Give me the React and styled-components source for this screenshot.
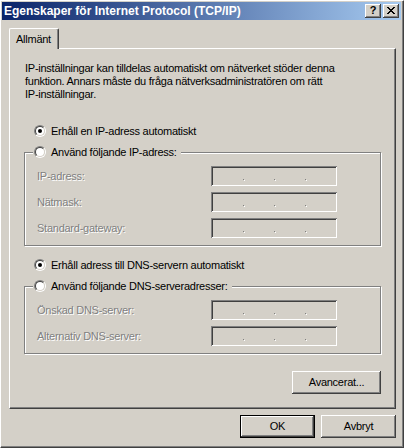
import React from 'react';
import styled, { createGlobalStyle } from 'styled-components';

const FACE = '#d4d0c8';
const FONT = '"Liberation Sans", Arial, sans-serif';

const GlobalStyle = createGlobalStyle`
  html, body { margin: 0; padding: 0; background: ${FACE}; }
  body { font-family: ${FONT}; font-size: 11px; }
`;

const Window = styled.div`
  width: 404px;
  height: 448px;
  box-sizing: border-box;
  background: ${FACE};
  border-top: 1px solid #fff;
  border-left: 1px solid #fff;
  border-right: 1px solid #404040;
  border-bottom: 1px solid #404040;
  box-shadow: inset -1px -1px 0 #808080;
  padding: 1px 2px 2px 1px;
  display: flex;
  flex-direction: column;
  font-family: ${FONT};
  font-size: 11px;
  line-height: 13px;
  letter-spacing: -0.25px;
  color: #000;
`;

const TitleBar = styled.div`
  height: 18px;
  flex: none;
  display: flex;
  align-items: center;
  padding: 0 2px;
  background: linear-gradient(to right, #0a246a, #a6caf0);
`;

const TitleText = styled.div`
  flex: 1;
  color: #fff;
  font-weight: bold;
  font-size: 12px;
  letter-spacing: 0;
  white-space: nowrap;
`;

const CaptionButtons = styled.div`
  display: flex;
  gap: 2px;
`;

const CaptionButton = styled.div`
  width: 16px;
  height: 14px;
  box-sizing: border-box;
  background: ${FACE};
  box-shadow: inset -1px -1px #404040, inset 1px 1px #fff, inset -2px -2px #808080, inset 2px 2px ${FACE};
  display: flex;
  align-items: center;
  justify-content: center;
  font-weight: bold;
  font-size: 11px;
  line-height: 1;
  letter-spacing: 0;
  color: #000;
  padding-bottom: 1px;
`;

const Body = styled.div`
  flex: 1;
  display: flex;
  flex-direction: column;
  padding: 8px 5px 0 7px;
`;

const TabStrip = styled.div`
  display: flex;
  height: 20px;
`;

const Tab = styled.div`
  position: relative;
  z-index: 1;
  width: 50px;
  height: 21px;
  box-sizing: border-box;
  background: ${FACE};
  border-top: 1px solid #fff;
  border-left: 1px solid #fff;
  border-right: 1px solid #404040;
  border-radius: 2px 2px 0 0;
  box-shadow: inset -1px 0 #808080;
  padding: 4px 0 0 6px;
  white-space: nowrap;
`;

const Panel = styled.div`
  height: 361px;
  box-sizing: border-box;
  border-top: 1px solid #fff;
  border-left: 1px solid #fff;
  border-right: 1px solid #404040;
  border-bottom: 1px solid #404040;
  box-shadow: inset -1px -1px #808080;
  padding: 13px 14px 0 14px;
  display: flex;
  flex-direction: column;
`;

const Description = styled.p`
  margin: 0 0 0 1px;
  white-space: nowrap;
`;

const RadioRow = styled.div`
  display: flex;
  align-items: center;
  gap: 5px;
  height: 14px;
  margin: ${p => p.$top}px 0 0 10px;
  white-space: nowrap;
`;

const RadioOuter = styled.span`
  width: 12px;
  height: 12px;
  flex: none;
  box-sizing: border-box;
  border-radius: 50%;
  border: 1px solid;
  border-color: #808080 #fff #fff #808080;
  display: flex;
`;

const RadioInner = styled.span`
  flex: 1;
  border-radius: 50%;
  border: 1px solid;
  border-color: #404040 ${FACE} ${FACE} #404040;
  background: #fff;
  display: flex;
  align-items: center;
  justify-content: center;
`;

const RadioDot = styled.span`
  width: 4px;
  height: 4px;
  border-radius: 50%;
  background: #000;
`;

const Group = styled.fieldset`
  margin: 7px 0 0 0;
  padding: 7px 0 7px 12px;
  border: 1px solid #808080;
  box-shadow: inset 1px 1px #fff, 1px 1px #fff;
  min-inline-size: 0;
`;

const Legend = styled.legend`
  display: flex;
  align-items: center;
  gap: 5px;
  height: 14px;
  margin-left: -4px;
  padding: 0 4px 0 1px;
  background: ${FACE};
  white-space: nowrap;
`;

const Rows = styled.div`
  display: grid;
  grid-template-columns: 174px 126px;
  row-gap: 6px;
  align-items: center;
`;

const Label = styled.span`
  color: #808080;
  text-shadow: 1px 1px 0 #fff;
  white-space: nowrap;
`;

const IpField = styled.div`
  width: 126px;
  height: 20px;
  box-sizing: border-box;
  background: ${FACE};
  box-shadow: inset 1px 1px #808080, inset -1px -1px #fff, inset 2px 2px #404040, inset -2px -2px ${FACE};
  display: flex;
  align-items: flex-end;
  gap: 30px;
  padding: 0 0 6px 32px;
`;

const Dot = styled.span`
  width: 1px;
  height: 1px;
  background: #808080;
  box-shadow: 1px 1px #fff;
`;

const ButtonRow = styled.div`
  display: flex;
  justify-content: flex-end;
  gap: 6px;
  margin-top: ${p => p.$top}px;
`;

const Button = styled.button`
  width: ${p => p.$w}px;
  height: 23px;
  box-sizing: border-box;
  margin: 0;
  padding: 0;
  border: none;
  background: ${FACE};
  font: inherit;
  letter-spacing: inherit;
  color: #000;
  box-shadow: ${p => p.$default
    ? `inset 0 0 0 1px #000, inset -2px -2px #404040, inset 2px 2px #fff, inset -3px -3px #808080, inset 3px 3px ${FACE}`
    : `inset -1px -1px #404040, inset 1px 1px #fff, inset -2px -2px #808080, inset 2px 2px ${FACE}`};
`;

const Radio = ({ checked }) => (
  <RadioOuter>
    <RadioInner>{checked && <RadioDot />}</RadioInner>
  </RadioOuter>
);

const IpInput = () => (
  <IpField>
    <Dot />
    <Dot />
    <Dot />
  </IpField>
);

const CloseGlyph = () => (
  <svg width="8" height="7" viewBox="0 0 8 7" shapeRendering="crispEdges">
    <path
      fill="#000"
      d="M0 0h2v1H0zM6 0h2v1H6zM1 1h2v1H1zM5 1h2v1H5zM2 2h4v1H2zM3 3h2v1H3zM2 4h4v1H2zM1 5h2v1H1zM5 5h2v1H5zM0 6h2v1H0zM6 6h2v1H6z"
    />
  </svg>
);

const ipRows = ['IP-adress:', 'Nätmask:', 'Standard-gateway:'];
const dnsRows = ['Önskad DNS-server:', 'Alternativ DNS-server:'];

const FieldRows = ({ labels }) => (
  <Rows>
    {labels.map(l => (
      <React.Fragment key={l}>
        <Label>{l}</Label>
        <IpInput />
      </React.Fragment>
    ))}
  </Rows>
);

export default function App() {
  return (
    <>
      <GlobalStyle />
      <Window>
        <TitleBar>
          <TitleText>Egenskaper för Internet Protocol (TCP/IP)</TitleText>
          <CaptionButtons>
            <CaptionButton>?</CaptionButton>
            <CaptionButton><CloseGlyph /></CaptionButton>
          </CaptionButtons>
        </TitleBar>
        <Body>
          <TabStrip>
            <Tab>Allmänt</Tab>
          </TabStrip>
          <Panel>
            <Description>
              IP-inställningar kan tilldelas automatiskt om nätverket stöder denna<br />
              funktion. Annars måste du fråga nätverksadministratören om rätt<br />
              IP-inställningar.
            </Description>
            <RadioRow $top={23}>
              <Radio checked />
              <span>Erhåll en IP-adress automatiskt</span>
            </RadioRow>
            <Group>
              <Legend>
                <Radio />
                <span>Använd följande IP-adress:</span>
              </Legend>
              <FieldRows labels={ipRows} />
            </Group>
            <RadioRow $top={12}>
              <Radio checked />
              <span>Erhåll adress till DNS-servern automatiskt</span>
            </RadioRow>
            <Group>
              <Legend>
                <Radio />
                <span>Använd följande DNS-serveradresser:</span>
              </Legend>
              <FieldRows labels={dnsRows} />
            </Group>
            <ButtonRow $top={17}>
              <Button $w={89}>Avancerat...</Button>
            </ButtonRow>
          </Panel>
          <ButtonRow $top={6}>
            <Button $w={75} $default>OK</Button>
            <Button $w={75}>Avbryt</Button>
          </ButtonRow>
        </Body>
      </Window>
    </>
  );
}
